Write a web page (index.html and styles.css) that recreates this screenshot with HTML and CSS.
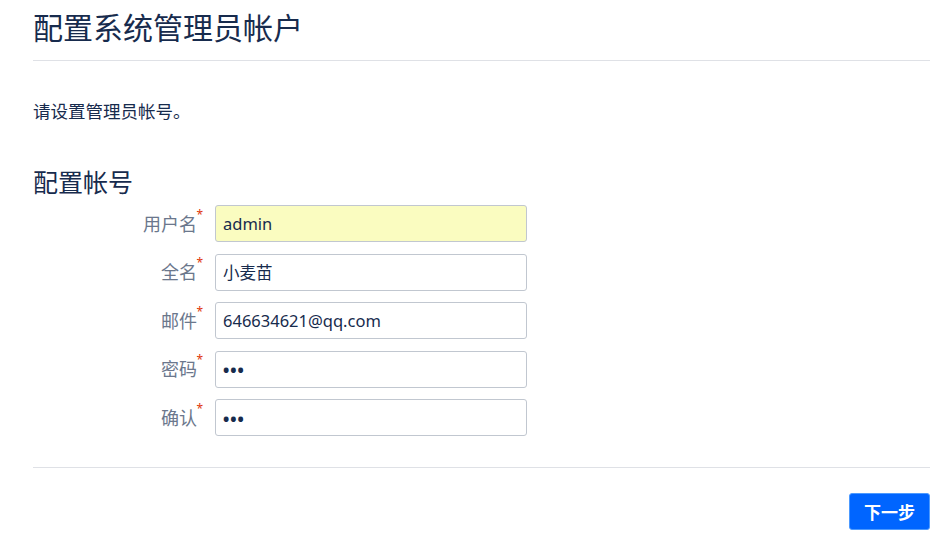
FILE: index.html
```html
<!DOCTYPE html>
<html lang="zh-CN">
<head>
<meta charset="utf-8">
<title>配置系统管理员帐户</title>
<link rel="stylesheet" href="styles.css">
</head>
<body>
<div class="page">
  <header class="page-header">
    <h1 class="title">配置系统管理员帐户</h1>
  </header>
  <p class="intro">请设置管理员帐号。</p>
  <h2 class="section-title">配置帐号</h2>
  <form class="form">
    <div class="field">
      <label class="field-label" for="u">用户名<span class="req">*</span></label>
      <input class="text-input autofill" id="u" type="text" value="admin">
    </div>
    <div class="field">
      <label class="field-label" for="n">全名<span class="req">*</span></label>
      <input class="text-input" id="n" type="text" value="小麦苗">
    </div>
    <div class="field">
      <label class="field-label" for="e">邮件<span class="req">*</span></label>
      <input class="text-input" id="e" type="text" value="646634621@qq.com">
    </div>
    <div class="field">
      <label class="field-label" for="p">密码<span class="req">*</span></label>
      <input class="text-input pw" id="p" type="password" value="abc">
    </div>
    <div class="field">
      <label class="field-label" for="c">确认<span class="req">*</span></label>
      <input class="text-input pw" id="c" type="password" value="abc">
    </div>
  </form>
  <div class="actions">
    <button class="btn-primary" type="button">下一步</button>
  </div>
</div>
</body>
</html>
```
FILE: styles.css
```css
* { box-sizing: border-box; }
html, body { margin: 0; padding: 0; background: #fff; }
body {
  font-family: "Noto Sans", "Noto Sans CJK SC", sans-serif;
  color: #172b4d;
}
.page {
  padding: 0 10px 0 33px;
}
.page-header {
  padding: 8px 0 12px;
  border-bottom: 1px solid #dfe1e6;
}
.title {
  margin: 0;
  font-size: 30px;
  font-weight: 400;
  line-height: 40px;
  color: #172b4d;
}
.intro {
  margin: 38px 0 0;
  font-size: 17.5px;
  line-height: 24px;
}
.section-title {
  margin: 43px 0 0;
  font-size: 25px;
  font-weight: 400;
  line-height: 32px;
}
.form {
  margin-top: 7px;
  display: flex;
  flex-direction: column;
  gap: 11.5px;
  padding-bottom: 31px;
  border-bottom: 1px solid #dfe1e6;
}
.field {
  display: flex;
  align-items: center;
  gap: 12px;
}
.field-label {
  width: 170px;
  text-align: right;
  font-size: 18px;
  color: #6b778c;
  line-height: 24px;
  position: relative;
  padding-right: 6px;
}
.req {
  position: absolute;
  right: 0;
  top: -3px;
  font-size: 12px;
  line-height: 12px;
  color: #de350b;
}
.text-input {
  width: 312px;
  height: 37px;
  border: 1px solid #c1c7d0;
  border-radius: 3px;
  padding: 0 7px;
  font-family: "Noto Sans", "Noto Sans CJK SC", sans-serif;
  font-size: 16.5px;
  color: #172b4d;
  background: #fff;
}
.text-input.autofill {
  background: #fafcc0;
}
.text-input.pw {
  font-size: 22px;
  padding-left: 6px;
  letter-spacing: -1px;
}
.actions {
  display: flex;
  justify-content: flex-end;
  padding-top: 25px;
}
.btn-primary {
  width: 81px;
  height: 37px;
  background: #0065ff;
  border: 1px solid #4c9aff;
  border-radius: 3px;
  color: #fff;
  font-family: "Noto Sans CJK SC", sans-serif;
  font-size: 17px;
  font-weight: 700;
  padding: 0;
}
```
